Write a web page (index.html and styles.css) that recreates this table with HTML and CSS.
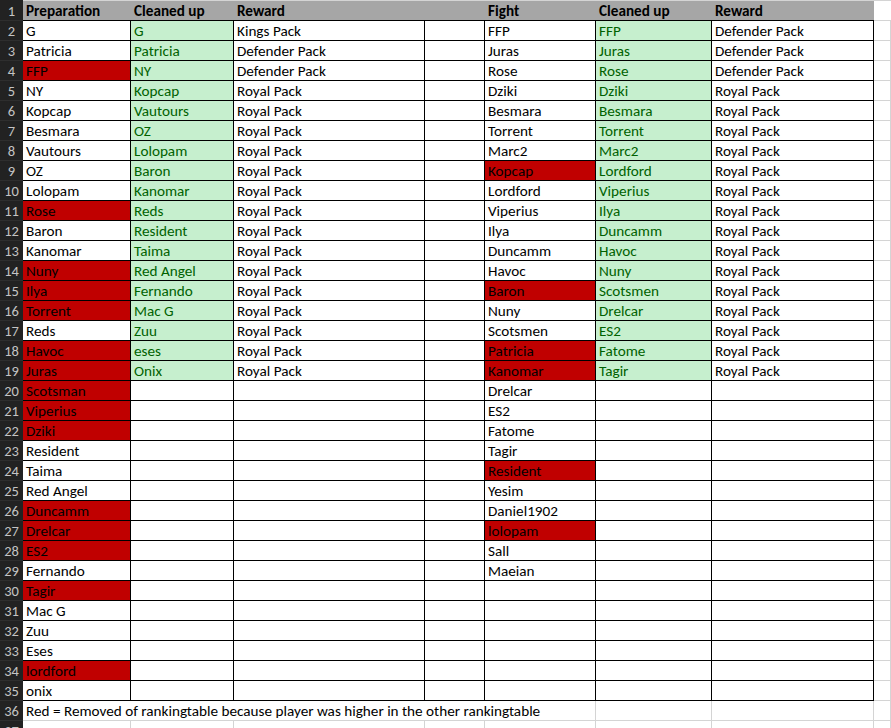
FILE: index.html
```html
<!DOCTYPE html>
<html>
<head>
<meta charset="utf-8">
<link rel="stylesheet" href="styles.css">
</head>
<body>
<div class="sheet">
  <div class="row head">
    <div class="rh">1</div><div class="c">Preparation</div><div class="c">Cleaned up</div><div class="c">Reward</div><div class="c"></div><div class="c">Fight</div><div class="c">Cleaned up</div><div class="c last">Reward</div><div class="c x"></div>
  </div>
  <div class="row"><div class="rh">2</div><div class="c">G</div><div class="c grn">G</div><div class="c">Kings Pack</div><div class="c"></div><div class="c">FFP</div><div class="c grn">FFP</div><div class="c">Defender Pack</div><div class="c x"></div></div>
  <div class="row"><div class="rh">3</div><div class="c">Patricia</div><div class="c grn">Patricia</div><div class="c">Defender Pack</div><div class="c"></div><div class="c">Juras</div><div class="c grn">Juras</div><div class="c">Defender Pack</div><div class="c x"></div></div>
  <div class="row"><div class="rh">4</div><div class="c red">FFP</div><div class="c grn">NY</div><div class="c">Defender Pack</div><div class="c"></div><div class="c">Rose</div><div class="c grn">Rose</div><div class="c">Defender Pack</div><div class="c x"></div></div>
  <div class="row"><div class="rh">5</div><div class="c">NY</div><div class="c grn">Kopcap</div><div class="c">Royal Pack</div><div class="c"></div><div class="c">Dziki</div><div class="c grn">Dziki</div><div class="c">Royal Pack</div><div class="c x"></div></div>
  <div class="row"><div class="rh">6</div><div class="c">Kopcap</div><div class="c grn">Vautours</div><div class="c">Royal Pack</div><div class="c"></div><div class="c">Besmara</div><div class="c grn">Besmara</div><div class="c">Royal Pack</div><div class="c x"></div></div>
  <div class="row"><div class="rh">7</div><div class="c">Besmara</div><div class="c grn">OZ</div><div class="c">Royal Pack</div><div class="c"></div><div class="c">Torrent</div><div class="c grn">Torrent</div><div class="c">Royal Pack</div><div class="c x"></div></div>
  <div class="row"><div class="rh">8</div><div class="c">Vautours</div><div class="c grn">Lolopam</div><div class="c">Royal Pack</div><div class="c"></div><div class="c">Marc2</div><div class="c grn">Marc2</div><div class="c">Royal Pack</div><div class="c x"></div></div>
  <div class="row"><div class="rh">9</div><div class="c">OZ</div><div class="c grn">Baron</div><div class="c">Royal Pack</div><div class="c"></div><div class="c red">Kopcap</div><div class="c grn">Lordford</div><div class="c">Royal Pack</div><div class="c x"></div></div>
  <div class="row"><div class="rh">10</div><div class="c">Lolopam</div><div class="c grn">Kanomar</div><div class="c">Royal Pack</div><div class="c"></div><div class="c">Lordford</div><div class="c grn">Viperius</div><div class="c">Royal Pack</div><div class="c x"></div></div>
  <div class="row"><div class="rh">11</div><div class="c red">Rose</div><div class="c grn">Reds</div><div class="c">Royal Pack</div><div class="c"></div><div class="c">Viperius</div><div class="c grn">Ilya</div><div class="c">Royal Pack</div><div class="c x"></div></div>
  <div class="row"><div class="rh">12</div><div class="c">Baron</div><div class="c grn">Resident</div><div class="c">Royal Pack</div><div class="c"></div><div class="c">Ilya</div><div class="c grn">Duncamm</div><div class="c">Royal Pack</div><div class="c x"></div></div>
  <div class="row"><div class="rh">13</div><div class="c">Kanomar</div><div class="c grn">Taima</div><div class="c">Royal Pack</div><div class="c"></div><div class="c">Duncamm</div><div class="c grn">Havoc</div><div class="c">Royal Pack</div><div class="c x"></div></div>
  <div class="row"><div class="rh">14</div><div class="c red">Nuny</div><div class="c grn">Red Angel</div><div class="c">Royal Pack</div><div class="c"></div><div class="c">Havoc</div><div class="c grn">Nuny</div><div class="c">Royal Pack</div><div class="c x"></div></div>
  <div class="row"><div class="rh">15</div><div class="c red">Ilya</div><div class="c grn">Fernando</div><div class="c">Royal Pack</div><div class="c"></div><div class="c red">Baron</div><div class="c grn">Scotsmen</div><div class="c">Royal Pack</div><div class="c x"></div></div>
  <div class="row"><div class="rh">16</div><div class="c red">Torrent</div><div class="c grn">Mac G</div><div class="c">Royal Pack</div><div class="c"></div><div class="c">Nuny</div><div class="c grn">Drelcar</div><div class="c">Royal Pack</div><div class="c x"></div></div>
  <div class="row"><div class="rh">17</div><div class="c">Reds</div><div class="c grn">Zuu</div><div class="c">Royal Pack</div><div class="c"></div><div class="c">Scotsmen</div><div class="c grn">ES2</div><div class="c">Royal Pack</div><div class="c x"></div></div>
  <div class="row"><div class="rh">18</div><div class="c red">Havoc</div><div class="c grn">eses</div><div class="c">Royal Pack</div><div class="c"></div><div class="c red">Patricia</div><div class="c grn">Fatome</div><div class="c">Royal Pack</div><div class="c x"></div></div>
  <div class="row"><div class="rh">19</div><div class="c red">Juras</div><div class="c grn">Onix</div><div class="c">Royal Pack</div><div class="c"></div><div class="c red">Kanomar</div><div class="c grn">Tagir</div><div class="c">Royal Pack</div><div class="c x"></div></div>
  <div class="row"><div class="rh">20</div><div class="c red">Scotsman</div><div class="c"></div><div class="c"></div><div class="c"></div><div class="c">Drelcar</div><div class="c"></div><div class="c"></div><div class="c x"></div></div>
  <div class="row"><div class="rh">21</div><div class="c red">Viperius</div><div class="c"></div><div class="c"></div><div class="c"></div><div class="c">ES2</div><div class="c"></div><div class="c"></div><div class="c x"></div></div>
  <div class="row"><div class="rh">22</div><div class="c red">Dziki</div><div class="c"></div><div class="c"></div><div class="c"></div><div class="c">Fatome</div><div class="c"></div><div class="c"></div><div class="c x"></div></div>
  <div class="row"><div class="rh">23</div><div class="c">Resident</div><div class="c"></div><div class="c"></div><div class="c"></div><div class="c">Tagir</div><div class="c"></div><div class="c"></div><div class="c x"></div></div>
  <div class="row"><div class="rh">24</div><div class="c">Taima</div><div class="c"></div><div class="c"></div><div class="c"></div><div class="c red">Resident</div><div class="c"></div><div class="c"></div><div class="c x"></div></div>
  <div class="row"><div class="rh">25</div><div class="c">Red Angel</div><div class="c"></div><div class="c"></div><div class="c"></div><div class="c">Yesim</div><div class="c"></div><div class="c"></div><div class="c x"></div></div>
  <div class="row"><div class="rh">26</div><div class="c red">Duncamm</div><div class="c"></div><div class="c"></div><div class="c"></div><div class="c">Daniel1902</div><div class="c"></div><div class="c"></div><div class="c x"></div></div>
  <div class="row"><div class="rh">27</div><div class="c red">Drelcar</div><div class="c"></div><div class="c"></div><div class="c"></div><div class="c red">lolopam</div><div class="c"></div><div class="c"></div><div class="c x"></div></div>
  <div class="row"><div class="rh">28</div><div class="c red">ES2</div><div class="c"></div><div class="c"></div><div class="c"></div><div class="c">Sall</div><div class="c"></div><div class="c"></div><div class="c x"></div></div>
  <div class="row"><div class="rh">29</div><div class="c">Fernando</div><div class="c"></div><div class="c"></div><div class="c"></div><div class="c">Maeian</div><div class="c"></div><div class="c"></div><div class="c x"></div></div>
  <div class="row"><div class="rh">30</div><div class="c red">Tagir</div><div class="c"></div><div class="c"></div><div class="c"></div><div class="c"></div><div class="c"></div><div class="c"></div><div class="c x"></div></div>
  <div class="row"><div class="rh">31</div><div class="c">Mac G</div><div class="c"></div><div class="c"></div><div class="c"></div><div class="c"></div><div class="c"></div><div class="c"></div><div class="c x"></div></div>
  <div class="row"><div class="rh">32</div><div class="c">Zuu</div><div class="c"></div><div class="c"></div><div class="c"></div><div class="c"></div><div class="c"></div><div class="c"></div><div class="c x"></div></div>
  <div class="row"><div class="rh">33</div><div class="c">Eses</div><div class="c"></div><div class="c"></div><div class="c"></div><div class="c"></div><div class="c"></div><div class="c"></div><div class="c x"></div></div>
  <div class="row"><div class="rh">34</div><div class="c red">lordford</div><div class="c"></div><div class="c"></div><div class="c"></div><div class="c"></div><div class="c"></div><div class="c"></div><div class="c x"></div></div>
  <div class="row"><div class="rh">35</div><div class="c">onix</div><div class="c"></div><div class="c"></div><div class="c"></div><div class="c"></div><div class="c"></div><div class="c"></div><div class="c x"></div></div>
  <div class="row plain"><div class="rh">36</div><div class="c note">Red = Removed of rankingtable because player was higher in the other rankingtable</div><div class="c"></div><div class="c"></div><div class="c x"></div></div>
  <div class="row plain"><div class="rh">37</div><div class="c"></div><div class="c"></div><div class="c"></div><div class="c"></div><div class="c"></div><div class="c"></div><div class="c"></div><div class="c x"></div></div>
</div>
</body>
</html>
```
FILE: styles.css
```css
html, body {
  margin: 0;
  padding: 0;
  background: #ffffff;
  overflow: hidden;
}
.sheet {
  width: 891px;
  height: 728px;
  overflow: hidden;
  font-family: Carlito, Lato, "Liberation Sans", sans-serif;
  font-size: 15.2px;
  color: #000;
}
.row {
  display: grid;
  grid-template-columns: 23px 108px 103px 191px 60px 111px 116px 162px 1fr;
  height: 20px;
}
.rh {
  background: #222222;
  color: #c4c4c4;
  text-align: center;
  font-size: 14.5px;
  line-height: 21px;
  box-sizing: border-box;
  border-bottom: 1px solid #2e2e2e;
  overflow: hidden;
}
.c {
  box-sizing: border-box;
  height: 20px;
  border-right: 1px solid #000;
  border-bottom: 1px solid #000;
  padding-left: 3px;
  line-height: 21px;
  white-space: nowrap;
}
.c.x {
  border-right: 1px solid #d4d4d4;
  border-bottom: 1px solid #d4d4d4;
}
.head {
  height: 21px;
}
.head .rh {
  line-height: 22px;
}
.head .c {
  height: 21px;
  background: #a6a6a6;
  font-weight: bold;
  border-top: 1px solid #d4d4d4;
  border-right: none;
  line-height: 20px;
}
.head .c.x {
  background: #ffffff;
  border-bottom: 1px solid #d4d4d4;
}
.red {
  background: #c00000;
}
.grn {
  background: #c6efce;
  color: #006100;
}
.plain .c {
  border-right: 1px solid #d4d4d4;
  border-bottom: 1px solid #d4d4d4;
}
.plain .note {
  grid-column: span 5;
}
```
